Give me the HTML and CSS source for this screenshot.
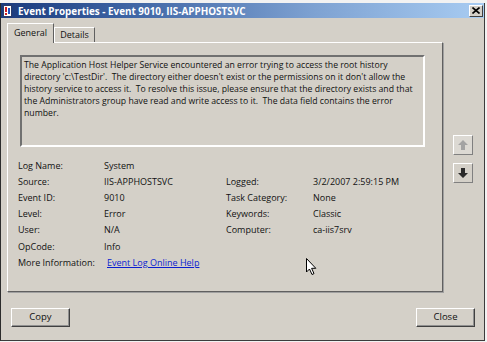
FILE: index.html
```html
<!DOCTYPE html>
<html lang="en">
<head>
<meta charset="UTF-8" />
<title>Event Properties - Event 9010, IIS-APPHOSTSVC</title>
<link rel="stylesheet" href="styles.css">
</head>
<body>
<div class="window">

  <!-- TITLE BAR -->
  <div class="titlebar">
    <span class="app-icon">
      <svg width="9" height="12" viewBox="0 0 9 12">
        <rect x="0.5" y="0.5" width="8" height="11" fill="#fff" stroke="#2a3c6a"/>
        <rect x="2" y="2" width="2" height="5" fill="#d02020"/>
        <rect x="5" y="3" width="2" height="6" fill="#2050c0"/>
        <rect x="2" y="8" width="2" height="2" fill="#d02020"/>
      </svg>
    </span>
    <span class="title">Event Properties - Event 9010, IIS-APPHOSTSVC</span>
    <span class="close-x">
      <svg width="8" height="7" viewBox="0 0 8 7">
        <path d="M0.5 0.5 L7.5 6.5 M7.5 0.5 L0.5 6.5" stroke="#000" stroke-width="1.6"/>
      </svg>
    </span>
  </div>

  <div class="dialog">
    <div class="main-row">

      <div class="tabs-area">
        <div class="tabs">
          <div class="tab active">General</div>
          <div class="tab">Details</div>
        </div>

        <div class="panel">
          <div class="desc">
            The Application Host Helper Service encountered an error trying to access the root history<br>
            directory 'c:\TestDir'.&nbsp; The directory either doesn't exist or the permissions on it don't allow the<br>
            history service to access it.&nbsp; To resolve this issue, please ensure that the directory exists and that<br>
            the Administrators group have read and write access to it.&nbsp; The data field contains the error<br>
            number.
          </div>

          <div class="fields">
            <span>Log Name:</span><span>System</span><span></span><span></span>
            <span>Source:</span><span>IIS-APPHOSTSVC</span><span>Logged:</span><span>3/2/2007 2:59:15 PM</span>
            <span>Event ID:</span><span>9010</span><span>Task Category:</span><span>None</span>
            <span>Level:</span><span>Error</span><span>Keywords:</span><span>Classic</span>
            <span>User:</span><span>N/A</span><span>Computer:</span><span>ca-iis7srv</span>
            <span>OpCode:</span><span>Info</span><span></span><span></span>
            <span>More Information:</span><span><a href="#" class="link">Event Log Online Help</a></span><span></span><span></span>
          </div>
        </div>
      </div>

      <div class="nav">
        <div class="nav-btn up">
          <svg width="10" height="10" viewBox="0 0 10 10"><path d="M5 0 L10 5 L7 5 L7 10 L3 10 L3 5 L0 5 Z" fill="#a3a3a3"/></svg>
        </div>
        <div class="nav-btn down">
          <svg width="10" height="10" viewBox="0 0 10 10"><path d="M3 0 L7 0 L7 5 L10 5 L5 10 L0 5 L3 5 Z" fill="#2a2a2a"/></svg>
        </div>
      </div>

    </div>

    <div class="actions">
      <div class="btn copy">Copy</div>
      <div class="btn close">Close</div>
    </div>
  </div>
</div>

<svg class="cursor" width="12" height="18" viewBox="0 0 12 18">
  <path d="M0.5 0.5 L0.5 14 L3.5 11 L6 16.5 L8 15.6 L5.6 10.3 L9.8 10.3 Z" fill="#fff" stroke="#000" stroke-width="1"/>
</svg>
</body>
</html>
```

FILE: styles.css
```css
:root{
  --face:#d4d0c8; --light:#fff; --shadow:#808080; --dark:#404040;
}
*{box-sizing:border-box;margin:0;padding:0}

body{
  width:487px;height:342px;overflow:hidden;
  background:#f2f2f2;
  font-family:"Open Sans",Arial,sans-serif;
  color:#111;
  position:relative;
}
.window{
  margin-top:3px;
  width:485px;height:338px;
  background:var(--face);
  border-left:1px solid #2c2c2c;
  border-right:1px solid #3c3c3c;
  border-bottom:1px solid #3c3c3c;
  display:flex;flex-direction:column;
}

/* title bar */
.titlebar{
  height:15px;
  display:flex;align-items:center;
  padding:0 1px 0 2px;
  background:linear-gradient(to right,#1a3a7c 0%,#3c62a2 25%,#7ea2d2 65%,#a8ccf2 100%);
}
.app-icon{display:flex;width:11px;margin-right:4px}
.title{
  color:#fff;font-weight:bold;font-size:9.9px;
  flex:1;white-space:nowrap;
}
.close-x{
  width:14px;height:12px;
  display:flex;align-items:center;justify-content:center;
  background:var(--face);
  border:1px solid;border-color:#fff #404040 #404040 #fff;
}

/* dialog body */
.dialog{flex:1;padding:4px 0 0 6px;display:flex;flex-direction:column}
.main-row{display:flex}

.tabs{display:flex;align-items:flex-end;height:20px;padding-left:1px}
.tab{
  height:15px;
  padding:0 5px;
  font-size:9px;line-height:14px;
  border:1px solid;border-bottom:none;
  border-color:#fff #606060 transparent #fff;
}
.tab.active{
  height:20px;line-height:17px;padding:0 6px;
  margin-left:-1px;margin-bottom:-1px;
  background:var(--face);position:relative;z-index:1;
}

.panel{
  width:436px;height:250px;
  border:1px solid;border-color:#fff #606060 #606060 #fff;
  box-shadow:1px 1px 0 #a0a0a0;
  padding:12px 17px 0 12px;
}
.desc{
  height:92px;
  border:2px solid;border-color:#707070 #fff #fff #707070;
  padding:2px 2px;
  font-size:8.7px;line-height:12px;
  white-space:nowrap;overflow:hidden;
}

.fields{
  margin:10px 0 0 -2px;
  display:grid;
  grid-template-columns:86px 122px 87px auto;
  grid-auto-rows:16.2px;
  align-items:center;
  font-size:9px;
  white-space:nowrap;
}
.link{color:#0a1ed0;text-decoration:underline;margin-left:3px}

/* prev / next */
.nav{margin:113px 0 0 10px;display:flex;flex-direction:column;gap:8px}
.nav-btn{
  width:20px;height:20px;
  display:flex;align-items:center;justify-content:center;
  border:1px solid;border-color:#fff #808080 #808080 #fff;
}
.nav-btn.up{background:#dcd9d3}

/* bottom buttons */
.actions{display:flex;justify-content:space-between;margin:16px 9px 0 4px}
.btn{
  width:59px;height:19px;
  text-align:center;font-size:9.5px;line-height:16px;
  border:1px solid;border-color:#fff #404040 #404040 #fff;
  box-shadow:inset -1px -1px 0 #909090;
}

.cursor{position:absolute;left:306px;top:258px}
```
